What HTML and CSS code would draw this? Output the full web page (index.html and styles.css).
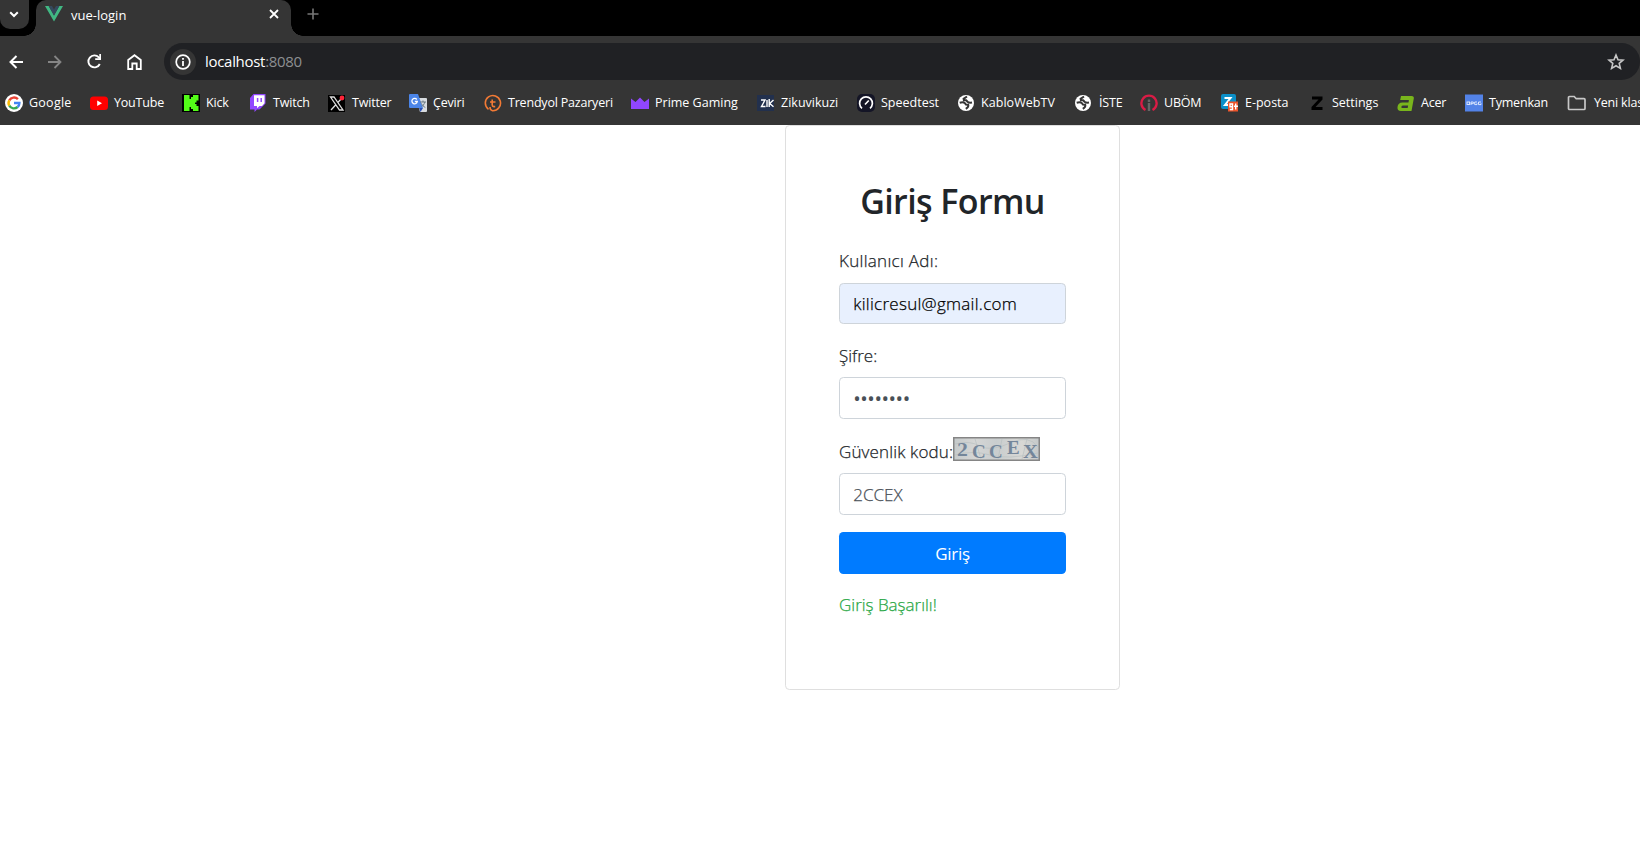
FILE: index.html
```html
<!DOCTYPE html>
<html lang="tr">
<head>
<meta charset="utf-8">
<title>vue-login</title>
<link rel="stylesheet" href="styles.css">
</head>
<body>
<header class="browser">
  <div class="tabstrip">
    <div class="tab-search"><svg width="10" height="7" viewBox="0 0 10 7"><path d="M1.2 1.2 5 5l3.800-3.800" fill="none" stroke="#fff" stroke-width="2"/></svg></div>
    <div class="tab">
      <svg class="vue" width="18" height="16" viewBox="0 0 18 16"><path d="M0 0h3.700L9 9.400 14.300 0H18L9 15.500z" fill="#41b883"/><path d="M3.700 0H7l2 3.500L11 0h3.300L9 9.400z" fill="#35495e"/></svg>
      <span class="tab-title">vue-login</span>
      <svg class="close" width="10" height="10" viewBox="0 0 10 10"><path d="m1 1 8 8M9 1 1 9" stroke="#fff" stroke-width="1.800"/></svg>
    </div>
    <svg class="plus" width="12" height="12" viewBox="0 0 12 12"><path d="M6 .5v11M.5 6h11" stroke="#777" stroke-width="1.600"/></svg>
  </div>
  <div class="toolbar">
    <div class="nav">
      <svg width="14" height="14" viewBox="0 0 14 14"><path d="M14 7H1.500M7.500 1 1.500 7l6 6" fill="none" stroke="#fff" stroke-width="2"/></svg>
      <svg width="14" height="14" viewBox="0 0 14 14"><path d="M0 7h12.500M6.500 1l6 6-6 6" fill="none" stroke="#858585" stroke-width="1.800"/></svg>
      <svg width="15" height="15" viewBox="0 0 15 15"><path d="M12.800 10A6 6 0 1 1 11.800 3.300L13.500 5" fill="none" stroke="#fff" stroke-width="1.900"/><path d="M14 0v6H8.200V4.300h4.100V0z" fill="#fff"/></svg>
      <svg width="15" height="16" viewBox="0 0 15 16"><path d="M1.200 6 7.500 1.200 13.800 6v9H9.700V9.500H5.300V15H1.200z" fill="none" stroke="#fff" stroke-width="1.800"/></svg>
    </div>
    <div class="omnibox">
      <span class="info"><svg width="16" height="16" viewBox="0 0 16 16"><circle cx="8" cy="8" r="6.800" fill="none" stroke="#fff" stroke-width="1.700"/><path d="M8 7v5M8 4v1.700" stroke="#fff" stroke-width="1.800"/></svg></span>
      <span class="url">localhost<span class="port">:8080</span></span>
      <svg class="star" width="18" height="18" viewBox="0 0 18 18"><path d="m9 2 2 4.700 5 .4-3.800 3.300 1.200 5L9 12.700l-4.400 2.700 1.200-5L2 7.100l5-.4z" fill="none" stroke="#c7c7c7" stroke-width="1.600"/></svg>
    </div>
  </div>
  <nav class="bookmarks">
    <a class="bm google"><svg width="18" height="18" viewBox="0 0 18 18"><circle cx="9" cy="9" r="9" fill="#fff"/><g fill="none" stroke-width="2.400"><path d="M4.300 6.300A5.400 5.400 0 0 1 12.900 5.200" stroke="#ea4335"/><path d="M4.300 11.700A5.400 5.400 0 0 1 4.300 6.300" stroke="#fbbc05"/><path d="M12.600 13A5.400 5.400 0 0 1 4.300 11.700" stroke="#34a853"/><path d="M9 9h5.400a5.400 5.400 0 0 1-1.800 4" stroke="#4285f4"/></g></svg><span>Google</span></a>
    <a class="bm"><svg width="18" height="18" viewBox="0 0 18 18"><rect y="2.500" width="18" height="13.500" rx="3.500" fill="red"/><path d="m7.200 6.500 4.800 2.700-4.800 2.700z" fill="#fff"/></svg><span>YouTube</span></a>
    <a class="bm"><svg width="18" height="18" viewBox="0 0 18 18"><path d="M0 0h18v18H0z" fill="#000"/><path d="M2 1h5.500v4H9V3h2V1h5.500v5.500h-2v2h-1.500v1.500h1.500v2h2V17H11v-2H9v-2H7.500v4H2z" fill="#53fc18"/></svg><span>Kick</span></a>
    <a class="bm"><svg width="18" height="18" viewBox="0 0 18 18"><path d="M4.500 0H16.500v9.500l-6 6H8L5.500 18v-2.500H1V4z" fill="#9146ff"/><path d="M5 1.200h10.500v8L13 12h-2.500L8 14.300V12H5z" fill="#fff"/><path d="M8.600 4v4M12.200 4v4" stroke="#9146ff" stroke-width="1.500"/></svg><span>Twitch</span></a>
    <a class="bm"><svg width="18" height="18" viewBox="0 0 18 18"><path d="M0 1h17v17H0z" fill="#000"/><path d="M2.500 3H6l9 13h-3.500zM14 4 9.800 8.500M7.600 11 3 16" fill="none" stroke="#ddd" stroke-width="1.300"/><circle cx="14" cy="4" r="2.400" fill="#ff2438"/></svg><span>Twitter</span></a>
    <a class="bm"><svg width="18" height="18" viewBox="0 0 18 18"><path d="M7 4h10a1 1 0 0 1 1 1v12a1 1 0 0 1-1 1h-6z" fill="#d8dce0"/><path d="M1 0h8l5 14H1a1 1 0 0 1-1-1V1a1 1 0 0 1 1-1z" fill="#4b85e8"/><path d="m10 14 1.500 4 2.500-4z" fill="#2950b5"/><path d="M7.800 5.500A2.700 2.700 0 1 0 8.300 7.500H5.800" fill="none" stroke="#fff" stroke-width="1.300"/><path d="M11 8h6M14 6.500V8m1.800 0c-.6 2.500-2 4-3.300 4.700m0-3.200c.6 1.500 2 3 3.800 4" fill="none" stroke="#6b7a83"/></svg><span>Çeviri</span></a>
    <a class="bm"><svg width="18" height="18" viewBox="0 0 18 18"><path d="M4.500 15.300A7.600 7.600 0 1 1 8.500 16.700Q6 16 6 13M8.200 5.500v5.500q0 1.600 1.600 1.600h1.400M6 8h5.500" fill="none" stroke="#f27a35" stroke-width="1.600"/></svg><span>Trendyol Pazaryeri</span></a>
    <a class="bm wide"><svg width="18" height="18" viewBox="0 0 18 18"><path d="M0 4.500 4.500 8 9 3.500 13.500 8 18 4.500V15H0z" fill="#9146ff"/></svg><span>Prime Gaming</span></a>
    <a class="bm wide"><svg width="18" height="18" viewBox="0 0 18 18"><path d="M0 1h17v16H0z" fill="#22304d"/><path d="M4 6h4l-3.500 6.500H8.500M10 6v7M12.200 5v8M16.500 6l-3.800 3.500 3.800 3.300" fill="none" stroke="#fff" stroke-width="1.400"/></svg><span>Zikuvikuzi</span></a>
    <a class="bm wide"><svg width="18" height="18" viewBox="0 0 18 18"><rect width="18" height="18" rx="5" fill="#141526"/><path d="M5 14.300A6.400 6.400 0 1 1 13 14.300M8 10.500l3.800-4" fill="none" stroke="#fff" stroke-width="1.700"/></svg><span>Speedtest</span></a>
    <a class="bm"><svg width="18" height="18" viewBox="0 0 18 18"><circle cx="8" cy="9" r="8" fill="#fff"/><path d="M1.700 8.800q3.300-1 5 .2l1.200 1.500 2.300.2q.8 2.300-2.400 4.200M9 2.500 5.600 4.800l.3 1.500h2.300l1.300 1.400q1.500 1.300 4.500.8" fill="none" stroke="#353535" stroke-width="2"/></svg><span class="kablo">KabloWebTV</span></a>
    <a class="bm"><svg width="18" height="18" viewBox="0 0 18 18"><circle cx="8" cy="9" r="8" fill="#fff"/><path d="M1.700 8.800q3.300-1 5 .2l1.200 1.500 2.300.2q.8 2.300-2.400 4.200M9 2.500 5.600 4.800l.3 1.500h2.300l1.300 1.400q1.500 1.300 4.500.8" fill="none" stroke="#353535" stroke-width="2"/></svg><span>İSTE</span></a>
    <a class="bm"><svg width="18" height="18" viewBox="0 0 18 18"><path d="M5.500 16A7.600 7.600 0 1 1 12.500 16" fill="none" stroke="#d91c45" stroke-width="2.400"/><path d="M9 9v8M9 5.500V8" stroke="#666" stroke-width="2.400"/></svg><span>UBÖM</span></a>
    <a class="bm wide"><svg width="18" height="18" viewBox="0 0 18 18"><rect width="15" height="15" rx="2" fill="#0b8fc8"/><path d="M3.500 4h6l-5.500 7h5" fill="none" stroke="#fff" stroke-width="2"/><path d="M7 7.500h10v10H7z" fill="#ee542a"/><path d="M11.500 12.800H9V10h2.500v5.500H8.800M14.700 9.500v6M13 12.300h4" fill="none" stroke="#fff" stroke-width="1.400"/></svg><span>E-posta</span></a>
    <a class="bm wide"><svg width="18" height="18" viewBox="0 0 18 18"><path d="M4 2.500h10.500v3L7.500 13h7v3H3.500v-3l7-7.500H4z" fill="#000"/></svg><span>Settings</span></a>
    <a class="bm"><svg width="18" height="18" viewBox="0 0 18 18"><path d="M4 2h10.500q2.800 0 2.300 2.600L14.500 17H4Q0 17 .5 13q.5-4.500 5-4.500h6l.4-2.500H3.200zm2.500 9.500q-2 0-2.200 1.400-.2 1.100 1.200 1.100h5.200l.4-2.500z" fill="#79b51c"/></svg><span>Acer</span></a>
    <a class="bm"><svg width="18" height="18" viewBox="0 0 18 18"><path d="M0 .5h18v17H0z" fill="#5383e8"/><g fill="none" stroke="#e8efff" stroke-width=".9"><rect x="2" y="8" width="2.600" height="2.500"/><path d="M6 11V8h2.300v1.700H6M12 8H9.700v2.600H12V9.300M16 8h-2.500v2.600H16V9.300"/></g></svg><span>Tymenkan</span></a>
    <a class="bm folder"><svg width="20" height="18" viewBox="0 0 20 18"><path d="M1.500 14.500V3.500a1 1 0 0 1 1-1h4.700l2 2.200H17a1 1 0 0 1 1 1v8.800a1 1 0 0 1-1 1H2.500a1 1 0 0 1-1-1z" fill="none" stroke="#c7c7c7" stroke-width="1.700"/></svg><span>Yeni klas</span></a>
  </nav>
</header>
<main class="page">
  <form class="card">
    <h2 class="title"><span>Giriş Formu</span></h2>
    <div class="group"><label class="label l-user">Kullanıcı Adı:</label><div class="control autofill"><span>kilicresul@gmail.com</span></div></div>
    <div class="group"><label class="label">Şifre:</label><div class="control"><span class="dots">••••••••</span></div></div>
    <div class="group last">
      <label class="label l-code"><span>Güvenlik kodu:</span><svg class="captcha" width="87" height="24" viewBox="0 0 87 24">
        <defs><linearGradient id="paper"><stop stop-color="#c5cacb"/><stop offset=".25" stop-color="#d5d6d5"/><stop offset=".5" stop-color="#c9cdce"/><stop offset=".8" stop-color="#d8d8d5"/><stop offset="1" stop-color="#c4c8c9"/></linearGradient></defs>
        <rect x=".75" y=".75" width="85.500" height="22.500" fill="url(#paper)" stroke="#858585" stroke-width="1.500"/>
        <path d="M2 7q14-4 25 2t30-3 28 4M2 18q18-5 35 0t48-2M22 2l6 20M49 2l-4 20M74 2l-5 20" fill="none" stroke="#b9c0c2" stroke-width=".7"/>
        <g class="captcha-text"><text x="4" y="18.500" textLength="11" lengthAdjust="spacingAndGlyphs">2</text><text x="19" y="21">C</text><text x="36" y="21">C</text><text x="54" y="17">E</text><text x="70" y="20.500" textLength="15" lengthAdjust="spacingAndGlyphs">X</text></g>
      </svg></label>
      <div class="control"><span class="code">2CCEX</span></div>
    </div>
    <button class="submit" type="button"><span>Giriş</span></button>
    <p class="success">Giriş Başarılı!</p>
  </form>
</main>
</body>
</html>
```
FILE: styles.css
```css
* { box-sizing: border-box; }
body { margin: 0; width: 1640px; height: 862px; overflow: hidden; background: #fff; font-family: "Open Sans", "Noto Sans", sans-serif; color: #212529; }
svg { flex: none; display: block; }

.browser { height: 125px; background: #353535; color: #fff; overflow: hidden; }
.tabstrip { height: 36px; background: #000; display: flex; align-items: flex-start; }
.tab-search { width: 29px; height: 29px; padding-right: 1px; background: #353535; border-radius: 0 0 10px 10px; display: flex; align-items: center; justify-content: center; }
.tab { position: relative; width: 255px; height: 36px; margin-left: 7px; padding: 0 12px 6px 9px; background: #353535; border-radius: 10px 10px 0 0; display: flex; align-items: center; }
.tab::before, .tab::after { content: ""; position: absolute; bottom: 0; width: 12px; height: 12px; }
.tab::before { left: -12px; background: radial-gradient(circle at 0 0, transparent 11.5px, #353535 12px); }
.tab::after { right: -12px; background: radial-gradient(circle at 100% 0, transparent 11.5px, #353535 12px); }
.vue { margin-top: -3px; }
.tab-title { margin-left: 8px; font-size: 13px; letter-spacing: 0; }
.close { margin: -2px 0 0 auto; }
.plus { margin: 8px 0 0 16px; }

.toolbar { height: 51px; padding-top: 7px; display: flex; }
.nav { width: 164px; height: 37px; padding-left: 9px; display: flex; gap: 25px; align-items: center; }
.omnibox { flex: 1; height: 37px; border-radius: 19px; background: #202124; display: flex; align-items: center; padding: 0 15px 0 6px; }
.info { width: 26px; height: 26px; border-radius: 50%; background: #353535; display: flex; align-items: center; justify-content: center; }
.url { margin: -2px 0 0 9px; font-size: 15px; letter-spacing: -0.3px; }
.port { color: #8d8f92; }
.star { margin-left: auto; }

.bookmarks { height: 32px; padding-left: 5px; display: grid; grid-template-columns: 85px 92px 67px 79px 81px 75px 147px 126px 100px 101px 117px 65px 81px 87px 89px 68px 102px 100px; align-items: center; }
.bm { display: flex; align-items: center; gap: 6px; white-space: nowrap; font-size: 12.5px; line-height: 18px; letter-spacing: -0.2px; }
.wide { letter-spacing: 0; }
.google { letter-spacing: 0.25px; }
.kablo { margin-left: -1px; letter-spacing: 0.05px; }
.folder { gap: 7px; }

.page { padding-left: 785px; }
.card { width: 335px; height: 564.5px; border: 1px solid #dfdfdf; border-radius: 4.4px; padding: 53px; }
.title { margin: 0 0 25.4px; padding-top: 1px; height: 43px; line-height: 43px; font-size: 34px; font-weight: 600; letter-spacing: -0.6px; text-align: center; white-space: nowrap; }
.group { margin-bottom: 17.6px; }
.last { padding-top: 1px; margin-bottom: 17px; }
.label, .control, .success { -webkit-text-stroke: 0.25px currentColor; }
.label { display: flex; height: 26.4px; margin-bottom: 8.8px; padding-top: 1px; line-height: 26.4px; font-size: 17px; font-weight: 300; white-space: nowrap; }
.l-user { letter-spacing: 0.3px; }
.l-code { letter-spacing: 0.14px; }
.control { height: 41.8px; padding: 1px 13.2px 0; border: 1px solid #ced4da; border-radius: 4.4px; display: flex; align-items: center; font-size: 17px; font-weight: 300; color: #495057; }
.autofill { background: #e8f0fe; color: #000; letter-spacing: 0.28px; }
.dots { font: 400 20px "Open Sans", sans-serif; letter-spacing: -0.45px; -webkit-text-stroke: 0; }
.captcha { margin-top: -2px; -webkit-text-stroke: 0; }
.captcha-text { font: 700 19px "Liberation Serif", serif; fill: #74869a; }
.submit { display: block; width: 100%; height: 42px; padding: 1px 0 0; border: 0; border-radius: 4.4px; background: #007bff; color: #fff; font: 400 17px "Open Sans", sans-serif; letter-spacing: -0.3px; }
.success { margin: 18.4px 0 0; line-height: 26.4px; font-size: 17px; font-weight: 300; color: #28a745; white-space: nowrap; }
```
